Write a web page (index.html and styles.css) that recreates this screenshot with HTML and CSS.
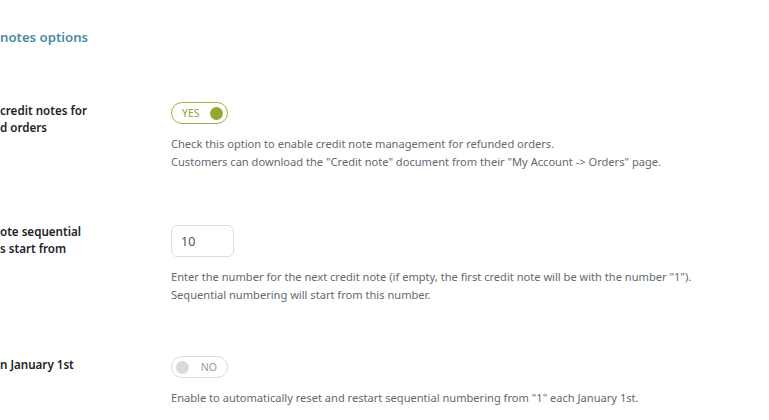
FILE: index.html
```html
<!DOCTYPE html>
<html lang="en">
<head>
  <meta charset="UTF-8" />
  <meta name="viewport" content="width=device-width, initial-scale=1.0"/>
  <title>Credit notes options</title>
  <link rel="stylesheet" href="styles.css">
</head>
<body>

  <h2 class="section-title">notes options</h2>

  <div class="options">
    <div class="option-row">
      <div class="option-label">credit notes for<br>d orders</div>
      <div class="option-field">
        <span class="toggle on">
          <span class="toggle-text">YES</span>
          <span class="toggle-knob"></span>
        </span>
        <p class="description">Check this option to enable credit note management for refunded orders.<br>Customers can download the "Credit note" document from their "My Account -&gt; Orders" page.</p>
      </div>
    </div>

    <div class="option-row">
      <div class="option-label">ote sequential<br>s start from</div>
      <div class="option-field">
        <input type="text" class="number-input" value="10">
        <p class="description">Enter the number for the next credit note (if empty, the first credit note will be with the number "1").<br>Sequential numbering will start from this number.</p>
      </div>
    </div>

    <div class="option-row">
      <div class="option-label">n January 1st</div>
      <div class="option-field">
        <span class="toggle off">
          <span class="toggle-knob"></span>
          <span class="toggle-text">NO</span>
        </span>
        <p class="description">Enable to automatically reset and restart sequential numbering from "1" each January 1st.</p>
      </div>
    </div>
  </div>

</body>
</html>
```

FILE: styles.css
```css
body {
  margin: 0;
  font-family: "Noto Sans", "Open Sans", sans-serif;
  background-color: #ffffff;
  color: #1d2327;
}

.section-title {
  margin: 0;
  padding-top: 28px;
  font-size: 13.2px;
  line-height: 18px;
  font-weight: 600;
  color: #4b89a6;
}

.options {
  display: flex;
  flex-direction: column;
  gap: 53px;
  padding-top: 56px;
}

.option-row {
  display: grid;
  grid-template-columns: 171px 1fr;
}

.option-label {
  font-size: 11.6px;
  line-height: 17px;
  font-weight: 600;
  color: #1d2327;
}

.option-field {
  display: flex;
  flex-direction: column;
  align-items: flex-start;
}

/* Toggle switches */
.toggle {
  box-sizing: border-box;
  display: inline-flex;
  align-items: center;
  justify-content: space-between;
  width: 57px;
  height: 22px;
  padding: 0 4px 0 10px;
  border-radius: 11px;
  background-color: #ffffff;
}

.toggle.on {
  border: 1px solid #9fb04a;
}

.toggle.off {
  border: 1px solid #dcdcdc;
  padding: 0 10px 0 4px;
}

.toggle-text {
  font-size: 10.5px;
  line-height: 12px;
}

.toggle.on .toggle-text {
  color: #8fa03a;
}

.toggle.off .toggle-text {
  color: #9a9a9a;
}

.toggle-knob {
  width: 13px;
  height: 13px;
  border-radius: 50%;
}

.toggle.on .toggle-knob {
  background-color: #93a631;
}

.toggle.off .toggle-knob {
  background-color: #dadada;
}

.number-input {
  box-sizing: border-box;
  width: 63px;
  height: 32px;
  margin-top: 2px;
  padding: 0 9px;
  font-family: inherit;
  font-size: 12.5px;
  color: #50575e;
  border: 1px solid #dcdcde;
  border-radius: 6px;
}

.description {
  margin: 11px 0 0;
  font-size: 11.1px;
  line-height: 17.5px;
  color: #646970;
}
```
